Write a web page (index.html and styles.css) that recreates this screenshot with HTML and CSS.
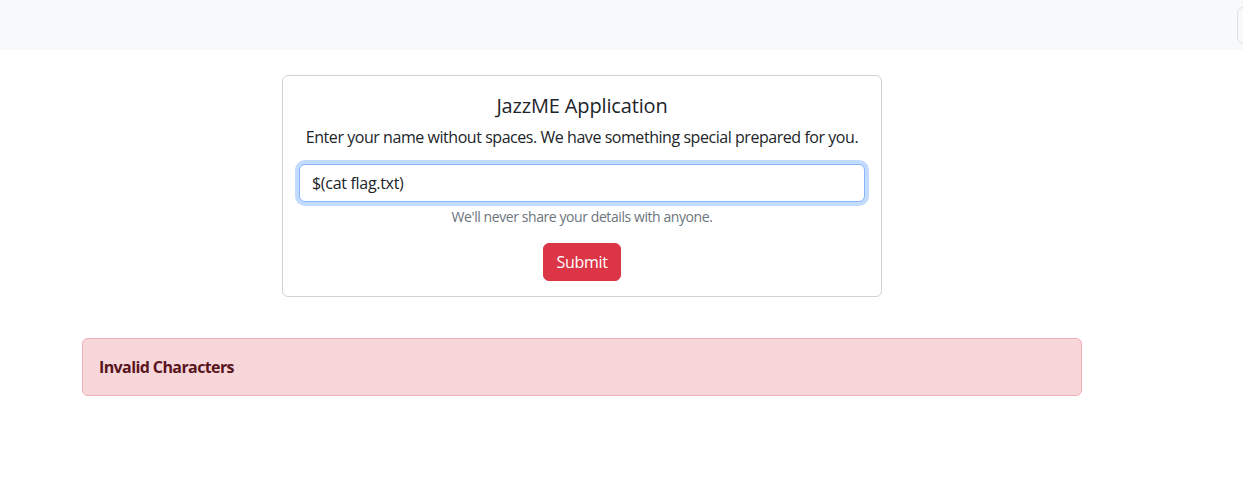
FILE: index.html
```html
<!DOCTYPE html>
<html lang="en">
<head>
    <meta charset="UTF-8">
    <meta name="viewport" content="width=device-width, initial-scale=1.0">
    <title>JazzME</title>
    <link rel="stylesheet" href="styles.css">
</head>
<body>

    <nav id="navbar">
        <button class="toggler" aria-label="menu"></button>
    </nav>

    <div class="wrap">
        <div class="card">
            <h5>JazzME Application</h5>
            <p>Enter your name without spaces. We have something special prepared for you.</p>
            <input type="text" class="field" value="$(cat flag.txt)">
            <div class="help">We'll never share your details with anyone.</div>
            <button class="submit">Submit</button>
        </div>

        <div class="alert">
            <b>Invalid Characters</b>
        </div>
    </div>

</body>
</html>
```

FILE: styles.css
```css
*{
    margin: 0;
    padding: 0;
    box-sizing: border-box;
}
body{
    font-family: "Open Sans", "Noto Sans", sans-serif;
    font-size: 16px;
    line-height: 24px;
    letter-spacing: -0.3px;
    color: #212529;
    background-color: #fff;
}
#navbar{
    height: 50px;
    background-color: #f8f9fa;
    display: flex;
    justify-content: flex-end;
    align-items: center;
    overflow: hidden;
}
.toggler{
    width: 56px;
    height: 37px;
    margin-right: -50px;
    border: 1px solid rgba(0,0,0,.1);
    border-radius: 6px;
    background: transparent;
}
.wrap{
    width: 1000px;
    margin-left: 82px;
}
.card{
    width: 600px;
    margin: 25px auto 0;
    padding: 18px 16px 15px;
    border: 1px solid rgba(0,0,0,.175);
    border-radius: 6px;
    display: flex;
    flex-direction: column;
    align-items: center;
    text-align: center;
}
.card h5{
    font-size: 20px;
    font-weight: 400;
    line-height: 24px;
    letter-spacing: -0.15px;
    margin-bottom: 7px;
}
.card p{
    white-space: nowrap;
    letter-spacing: -0.45px;
    margin-bottom: 15px;
}
.field{
    width: 100%;
    height: 38px;
    padding: 6px 12px;
    font-family: inherit;
    font-size: 16px;
    letter-spacing: -0.3px;
    color: #212529;
    border: 1px solid #86b7fe;
    border-radius: 6px;
    outline: none;
    box-shadow: 0 0 0 4px rgba(13,110,253,.25);
}
.help{
    margin-top: 4px;
    font-size: 14px;
    line-height: 21px;
    letter-spacing: -0.42px;
    color: #6c757d;
}
.submit{
    margin-top: 16px;
    height: 38px;
    padding: 6px 12px;
    font-family: inherit;
    font-size: 16px;
    letter-spacing: -0.3px;
    color: #fff;
    background-color: #dc3545;
    border: 1px solid #dc3545;
    border-radius: 6px;
}
.alert{
    margin-top: 41px;
    padding: 16px;
    background-color: #f8d7da;
    border: 1px solid #f1aeb5;
    border-radius: 6px;
    color: #58151c;
}
.alert b{
    letter-spacing: -0.6px;
}
```
